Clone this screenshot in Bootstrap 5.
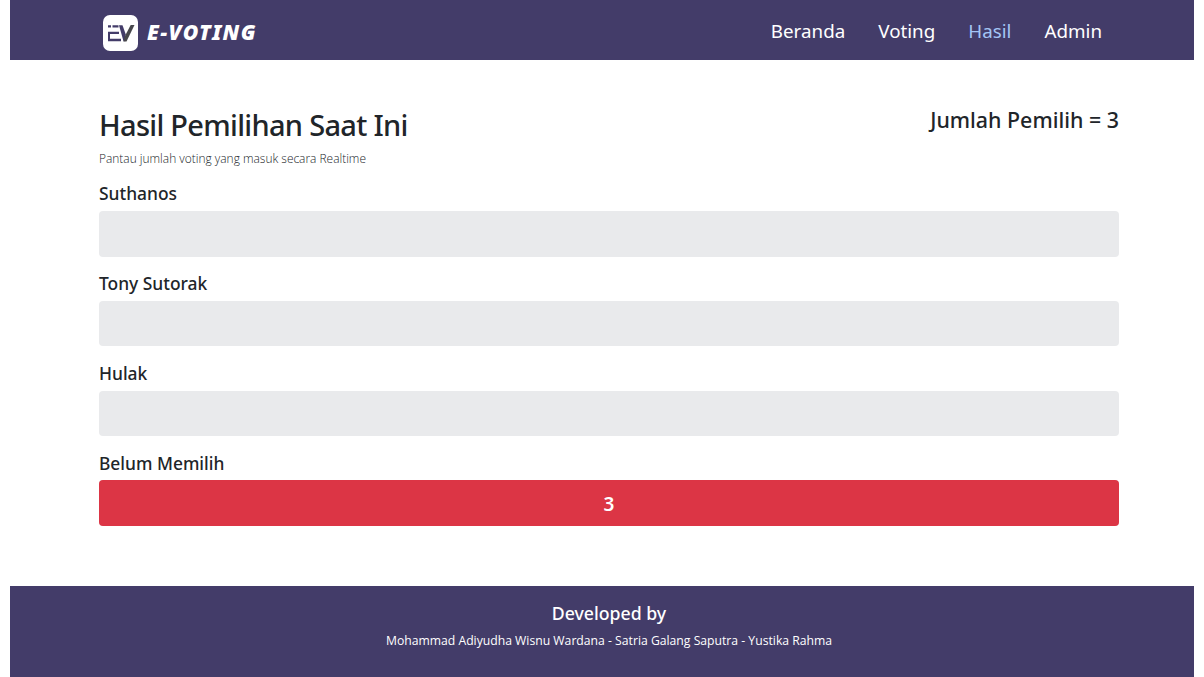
<!DOCTYPE html>
<html lang="id">
<head>
<meta charset="utf-8">
<meta name="viewport" content="width=device-width, initial-scale=1">
<title>E-Voting</title>
<link href="https://cdn.jsdelivr.net/npm/bootstrap@5.3.0/dist/css/bootstrap.min.css" rel="stylesheet">
<style>
body{font-family:"Open Sans","Noto Sans",sans-serif;padding:0 10px;height:677px;overflow:hidden}
h1,h2,h3,.tally{font-family:"Noto Sans","Open Sans",sans-serif;font-weight:500;margin:0}
.site-bar,.site-foot{background:#433c69;color:#fff}
.site-bar{height:60px;padding:0 92px 0 93px}
.brand-mark{margin-top:5px}
.brand-name{font-family:"Noto Sans",sans-serif;font-weight:900;font-style:italic;font-size:21.2px;letter-spacing:1.35px;margin-left:9px;line-height:30px;padding-top:4px}
.site-bar .nav{gap:33px;padding-top:2px}
.site-bar .nav-link{padding:0;color:#fff;font-size:18.8px;line-height:30px;font-family:"Noto Sans",sans-serif}
.site-bar .nav-link.active{color:#a3c5f5}
.results{width:1020px;margin-left:89px;height:526px;padding-top:45px}
.results h1{font-size:29px;line-height:40px;letter-spacing:-.7px}
.subtitle{font-size:11.95px;line-height:18px;font-weight:300;margin:5px 0 13.3px}
.voters{font-size:21.4px;line-height:30px}
.candidate{height:89.8px}
.candidate h3{font-size:17.4px;line-height:24px;margin-bottom:5.7px}
.candidate .progress{height:45.6px;border-radius:4px;background:#e9eaec}
.candidate .tally{font-size:19px;font-weight:600;padding-top:2px}
.site-foot{height:91px;padding:15px 0 0 14px}
.site-foot h3{font-size:17.7px;line-height:24px}
.site-foot p{font-size:12.2px;line-height:18px;margin:7px 0 0}
</style>
</head>
<body>
<nav class="site-bar d-flex align-items-center justify-content-between">
  <a class="d-flex align-items-center text-white text-decoration-none" href="#">
    <svg class="brand-mark" width="35" height="36" viewBox="0 0 35 36" aria-hidden="true">
      <rect width="35" height="36" rx="7" fill="#fff"/>
      <path d="M5 11.300h3M9.500 11.300h6M5 17.800h11M5 25h13" fill="none" stroke="#433c69" stroke-width="2.300"/>
      <path d="M6 18v6" stroke="#433c69" stroke-width="2"/>
      <path d="M16 10.200h3.500l3.200 9-1.200 7h-1z" fill="#433c69"/>
      <path d="M31.500 10h-3.800l-6 11.500-1.200 5h3z" fill="#47474b"/>
    </svg>
    <span class="brand-name">E-VOTING</span>
  </a>
  <div class="nav flex-nowrap">
    <a class="nav-link" href="#">Beranda</a>
    <a class="nav-link" href="#">Voting</a>
    <a class="nav-link active" href="#">Hasil</a>
    <a class="nav-link" href="#">Admin</a>
  </div>
</nav>
<main class="results">
  <div class="d-flex justify-content-between align-items-start">
    <div>
      <h1>Hasil Pemilihan Saat Ini</h1>
      <p class="subtitle">Pantau jumlah voting yang masuk secara Realtime</p>
    </div>
    <h2 class="voters">Jumlah Pemilih = 3</h2>
  </div>
  <section class="candidate"><h3>Suthanos</h3><div class="progress"></div></section>
  <section class="candidate"><h3>Tony Sutorak</h3><div class="progress"></div></section>
  <section class="candidate"><h3>Hulak</h3><div class="progress"></div></section>
  <section class="candidate"><h3>Belum Memilih</h3><div class="progress"><div class="progress-bar bg-danger tally" style="width:100%">3</div></div></section>
</main>
<footer class="site-foot text-center">
  <h3>Developed by</h3>
  <p>Mohammad Adiyudha Wisnu Wardana - Satria Galang Saputra - Yustika Rahma</p>
</footer>
<script src="https://cdn.jsdelivr.net/npm/bootstrap@5.3.0/dist/js/bootstrap.bundle.min.js"></script>
</body>
</html>
